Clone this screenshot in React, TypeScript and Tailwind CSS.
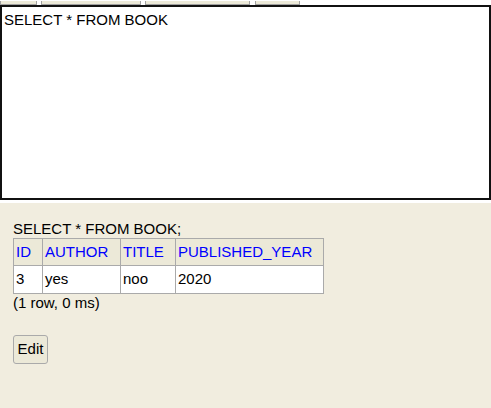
import React from "react";

export default function App() {
  const font = { fontFamily: '"Liberation Sans", Arial, sans-serif' };
  return (
    <div className="w-[491px] h-[408px] bg-white overflow-hidden flex flex-col" style={font}>
      <div className="flex h-[5px] items-end">
        <div className="w-[37px] h-[4px] ml-0 bg-[#ece9d8] border-x border-b border-[#a0a0a0] -mt-px" />
        <div className="w-[100px] h-[4px] ml-[4px] bg-[#ece9d8] border-x border-b border-[#a0a0a0]" />
        <div className="w-[105px] h-[4px] ml-[4px] bg-[#ece9d8] border-x border-b border-[#a0a0a0]" />
        <div className="w-[45px] h-[4px] ml-[5px] bg-[#ece9d8] border-x border-b border-[#a0a0a0]" />
      </div>
      <div className="h-[195px] w-[491px] border-2 border-[#111] bg-white pl-[2px] pt-[4px] text-[15px] text-black leading-[17px]">
        SELECT * FROM BOOK
      </div>
      <div className="h-[3px] bg-white" />
      <div className="flex-1 bg-[#f1eddf] pl-[13px] pt-[16px] text-[15px] text-black">
        <div className="leading-[19px]">SELECT * FROM BOOK;</div>
        <table className="border-collapse border border-[#aaa] mt-0">
          <thead>
            <tr className="bg-[#ece9d8] text-[#0000ff] h-[27px]">
              <th className="border border-[#aaa] font-normal text-left px-[2px] w-[29px]">ID</th>
              <th className="border border-[#aaa] font-normal text-left px-[2px] w-[78px]">AUTHOR</th>
              <th className="border border-[#aaa] font-normal text-left px-[2px] w-[55px]">TITLE</th>
              <th className="border border-[#aaa] font-normal text-left px-[2px] w-[148px]">PUBLISHED_YEAR</th>
            </tr>
          </thead>
          <tbody>
            <tr className="bg-white h-[28px]">
              <td className="border border-[#aaa] px-[2px]">3</td>
              <td className="border border-[#aaa] px-[2px]">yes</td>
              <td className="border border-[#aaa] px-[2px]">noo</td>
              <td className="border border-[#aaa] px-[2px]">2020</td>
            </tr>
          </tbody>
        </table>
        <div className="leading-[18px] mt-0">(1 row, 0 ms)</div>
        <button className="mt-[23px] h-[29px] w-[35px] bg-[#ece9d8] border border-[#aaa] rounded-[3px] text-[15px] text-black" style={font}>
          Edit
        </button>
      </div>
    </div>
  );
}
